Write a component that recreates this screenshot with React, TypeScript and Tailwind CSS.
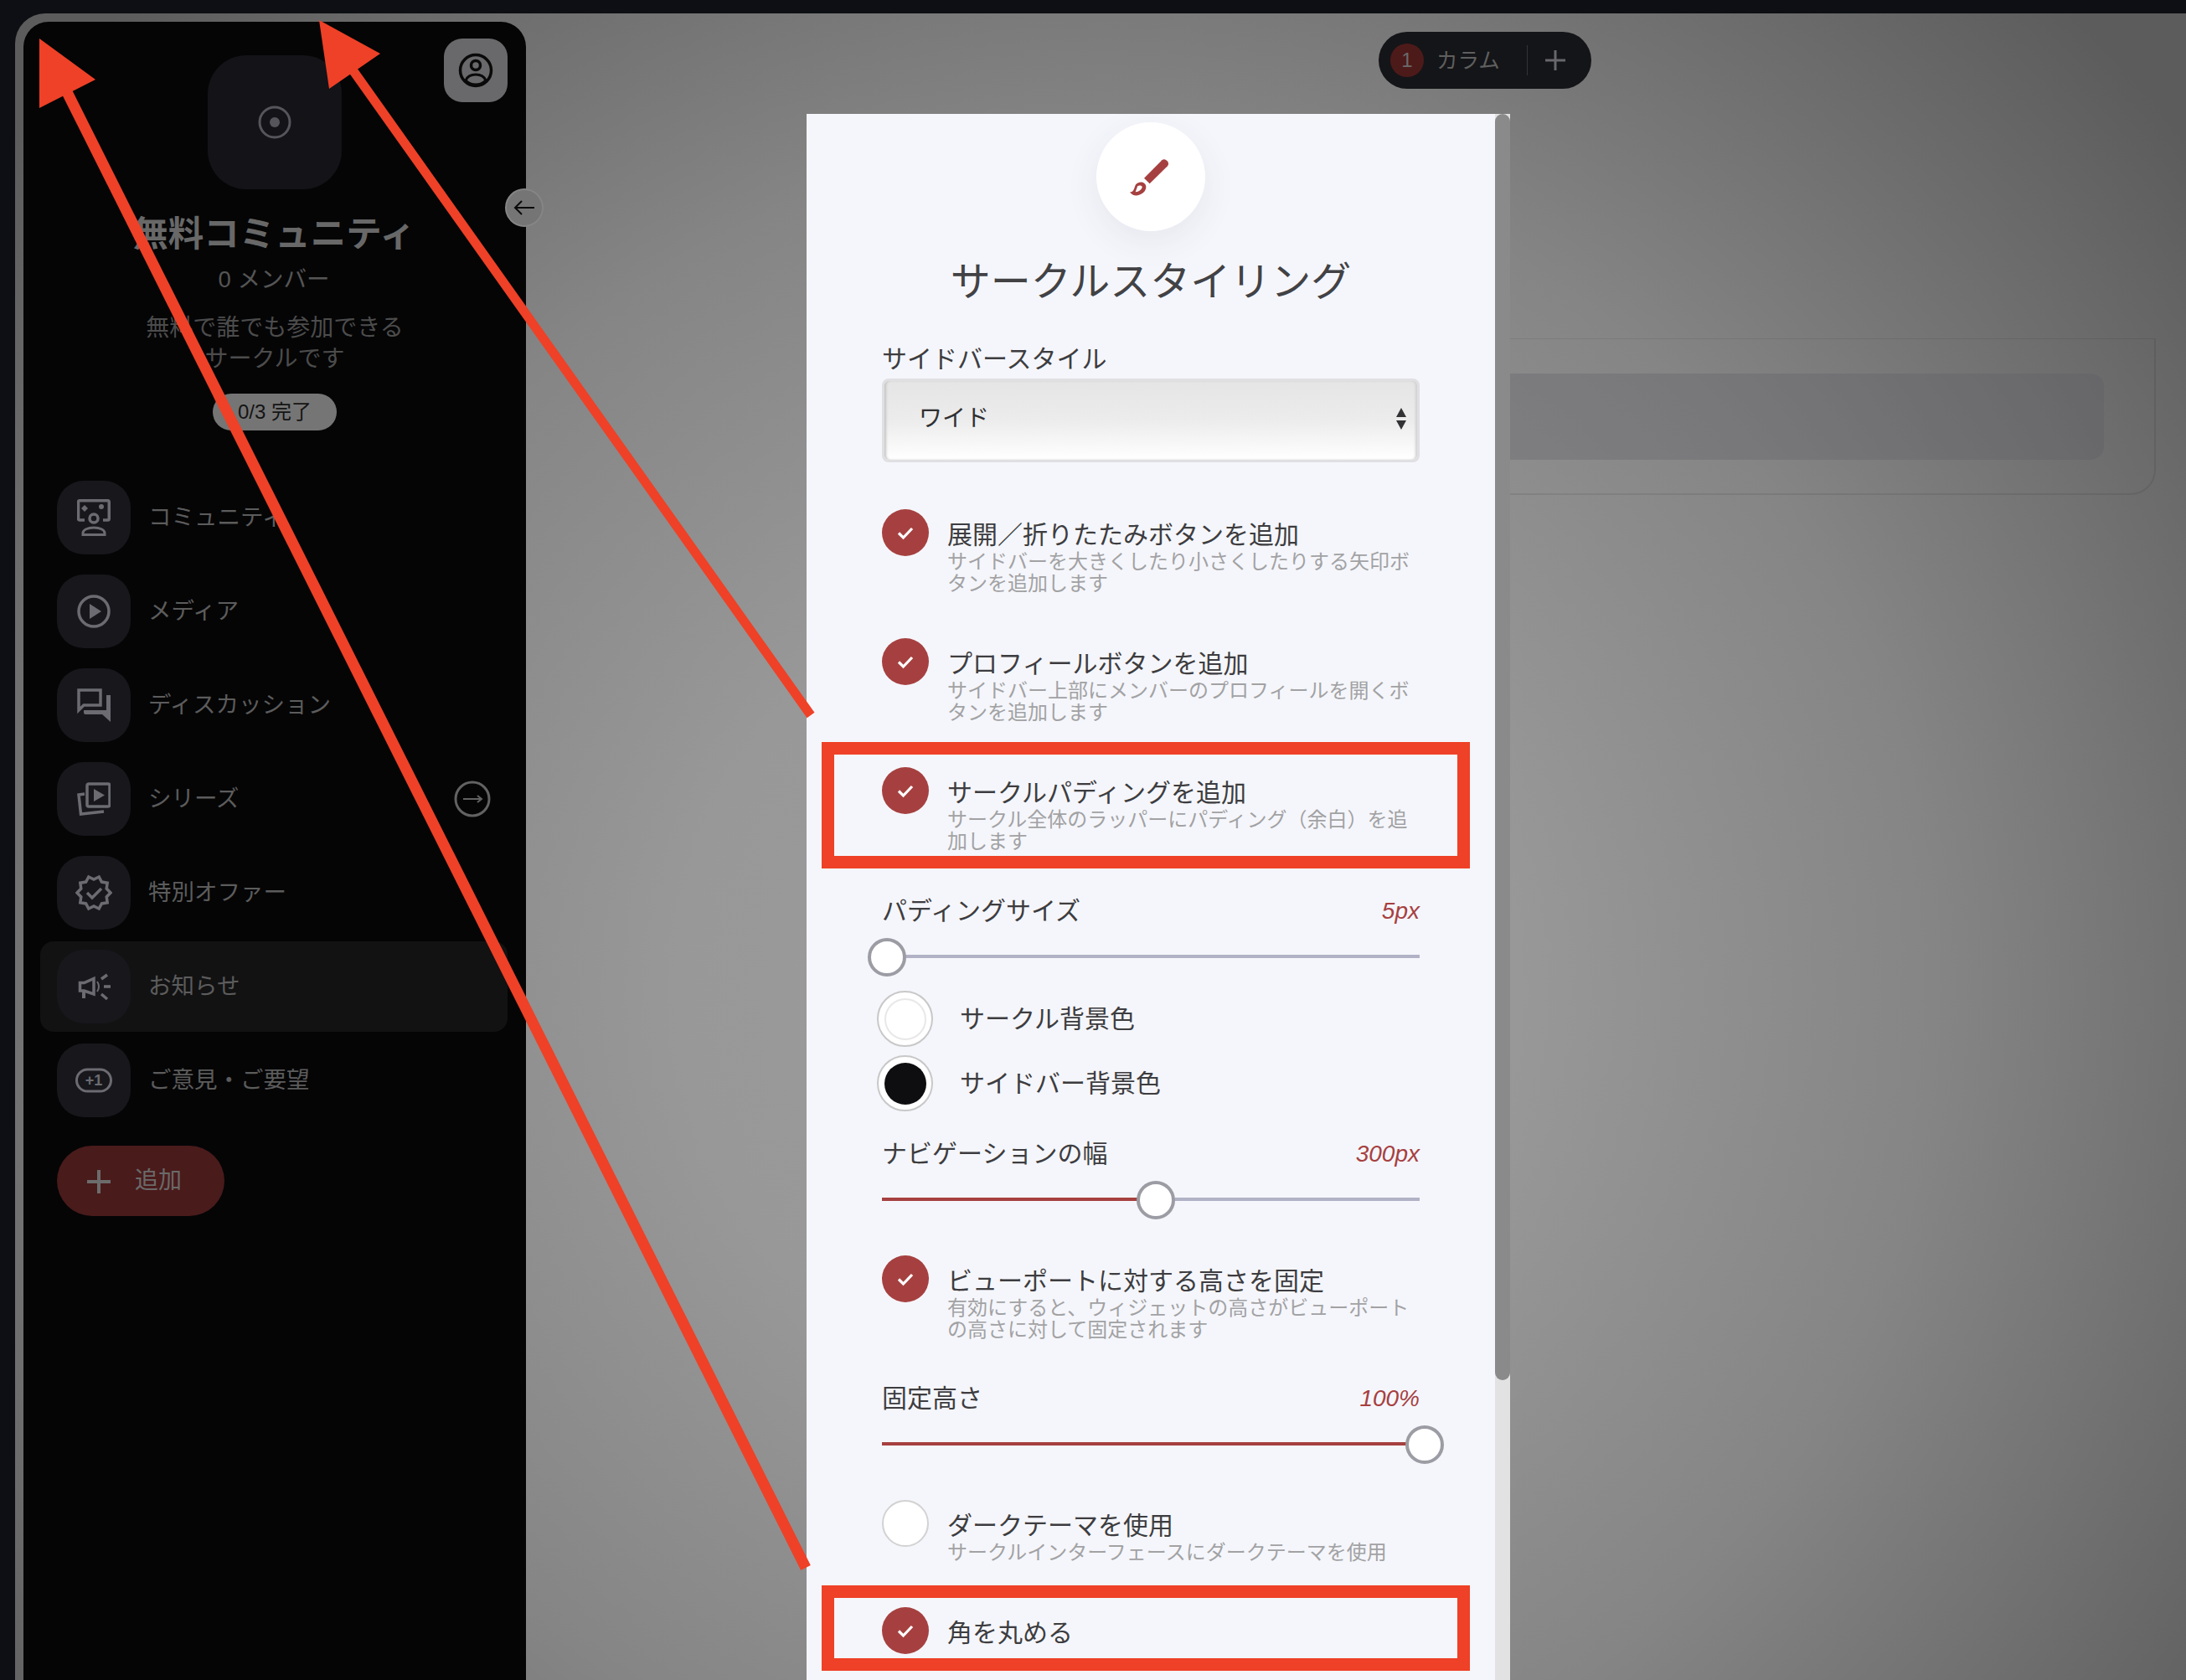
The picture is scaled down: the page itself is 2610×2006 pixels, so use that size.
import React from "react";

const ICON = "#6b6b71";

function CommunityIcon() {
  return (
    <svg width="40" height="44" viewBox="0 0 40 44" fill="none" stroke={ICON} strokeWidth="3.500">
      <path d="M9 25H3a1.500 1.500 0 0 1-1.500-1.500V3A1.500 1.500 0 0 1 3 1.750H37A1.500 1.500 0 0 1 38.250 3V23.500A1.500 1.500 0 0 1 37 25H31" />
      <path d="M9 7l4 4-4 4-4-4z" fill={ICON} stroke="none" />
      <circle cx="29" cy="9" r="3" fill={ICON} stroke="none" />
      <circle cx="20" cy="23" r="5" />
      <path d="M7 42.500v-2c0-4 6-6.500 13-6.500s13 2.500 13 6.500v2z" strokeWidth="3" />
    </svg>
  );
}
function MediaIcon() {
  return (
    <svg width="40" height="40" viewBox="0 0 40 40" fill="none" stroke={ICON} strokeWidth="3.500">
      <circle cx="20" cy="20" r="18" />
      <path d="M15 11L29 20L15 29Z" fill={ICON} stroke="none" />
    </svg>
  );
}
function ChatIcon() {
  return (
    <svg width="40" height="40" viewBox="0 0 40 40" fill="none">
      <path d="M2 2H28V20H8L2 26Z" stroke={ICON} strokeWidth="3.500" />
      <path d="M35 8H40V40L30 31H10Q8 31 8 29V26H35Z" fill={ICON} />
    </svg>
  );
}
function SeriesIcon() {
  return (
    <svg width="40" height="40" viewBox="0 0 40 40" fill="none" stroke={ICON} strokeWidth="3.500">
      <rect x="12" y="2" width="27" height="27" rx="2" />
      <path d="M20 8L33 15.500L20 23Z" fill={ICON} stroke="none" />
      <path d="M9 14L2 15L4.500 38L32 35" />
    </svg>
  );
}
function BadgeIcon() {
  const pts: string[] = [];
  for (let i = 0; i < 20; i++) {
    const r = i % 2 === 0 ? 20 : 16;
    const a = (Math.PI * i) / 10;
    pts.push(`${22 + r * Math.cos(a)},${22 + r * Math.sin(a)}`);
  }
  return (
    <svg width="44" height="44" viewBox="0 0 44 44" fill="none" stroke={ICON} strokeWidth="3.500">
      <polygon points={pts.join(" ")} />
      <path d="M14 22L20 28L31 17" strokeWidth="3.500" />
    </svg>
  );
}
function MegaphoneIcon() {
  return (
    <svg width="40" height="36" viewBox="0 0 40 36" fill="none" stroke={ICON}>
      <path d="M3.500 13.500H8.500L20 8.500V27L8.500 23H3.500Z" strokeWidth="3.500" />
      <path d="M8 23V32" strokeWidth="4" />
      <path d="M24 12q4 6 0 12" strokeWidth="2" />
      <path d="M29 9L36 4M32 18H40M29 27L36 33" strokeWidth="3.500" />
    </svg>
  );
}
function PlusOneIcon() {
  return (
    <svg width="44" height="30" viewBox="0 0 44 30" fill="none" stroke={ICON} strokeWidth="3">
      <rect x="1.500" y="2" width="41" height="26" rx="13" />
      <text x="22" y="21" textAnchor="middle" fontSize="18" fontWeight="700" fontFamily="Liberation Sans" fill={ICON} stroke="none">+1</text>
    </svg>
  );
}

function NavRow({ icon, label, active, arrow }: { icon: React.ReactNode; label: string; active?: boolean; arrow?: boolean }) {
  return (
    <div className={`flex h-[108px] items-center rounded-[16px] pl-[20px] pr-[20px] ${active ? "bg-[#121213]" : ""}`}>
      <div className="flex h-[88px] w-[88px] items-center justify-center rounded-[32px] bg-[#17171c]">{icon}</div>
      <span className="ml-[21px] flex-1 text-[27.500px] leading-[36px] text-[#5c5c5c]">{label}</span>
      {arrow && (
        <svg width="44" height="44" viewBox="0 0 44 44" fill="none" stroke="#626262" strokeWidth="3">
          <circle cx="22" cy="22" r="20" />
          <path d="M11 22H33M28 18L33 22L28 26" strokeWidth="2" />
        </svg>
      )}
    </div>
  );
}

function Check({ on = true }: { on?: boolean }) {
  return on ? (
    <div className="flex h-[56px] w-[56px] shrink-0 items-center justify-center rounded-full bg-[#a64040]">
      <svg width="24" height="24" viewBox="0 0 24 24" fill="none" stroke="#fff" strokeWidth="3.200">
        <path d="M4 12.500L9.500 18L20 7" />
      </svg>
    </div>
  ) : (
    <div className="h-[56px] w-[56px] shrink-0 rounded-full border-2 border-[#d2d2d2] bg-white" />
  );
}

function CheckRow({ title, desc, on, className }: { title: string; desc?: string; on?: boolean; className: string }) {
  return (
    <div className={`flex ${className}`}>
      <Check on={on} />
      <div className="ml-[22px] w-[564px] pt-[13px]">
        <div className="text-[30px] leading-[36px] text-[#3d3d40]">{title}</div>
        {desc && <div className="mt-[1px] text-[24px] leading-[26px] text-[#a2a2a4]">{desc}</div>}
      </div>
    </div>
  );
}

function SliderHead({ label, value, className }: { label: string; value: string; className: string }) {
  return (
    <div className={`flex h-[36px] items-center justify-between ${className}`}>
      <span className="text-[30px] leading-[36px] text-[#3d3d40]">{label}</span>
      <span className="text-[28px] italic leading-[36px] text-[#a64040]">{value}</span>
    </div>
  );
}

function Slider({ fillClass, thumbClass }: { fillClass: string; thumbClass: string }) {
  return (
    <div className="relative mt-[14px] flex h-[44px] items-center">
      <div className="h-[4px] w-full bg-[#b2b2c6]">
        <div className={`h-full bg-[#a64040] ${fillClass}`} />
      </div>
      <div className={`absolute top-0 h-[46px] w-[46px] rounded-full border-[4px] border-[#9c9ca4] bg-white ${thumbClass}`} />
    </div>
  );
}

function Swatch({ label, inner, className }: { label: string; inner: string; className: string }) {
  return (
    <div className={`-ml-[6px] flex items-center ${className}`}>
      <div className="flex h-[67px] w-[67px] items-center justify-center rounded-full border-2 border-[#c8c8c8] bg-white">
        <div className={`h-[50px] w-[50px] rounded-full ${inner}`} />
      </div>
      <span className="ml-[32px] text-[30px] leading-[36px] text-[#3d3d40]">{label}</span>
    </div>
  );
}

export default function App() {
  return (
    <div className="relative flex h-[2006px] w-[2610px] flex-col overflow-hidden bg-[#0d0f14] font-['Liberation_Sans','Noto_Sans_CJK_JP',sans-serif]">
      <main className="ml-[18px] mt-[16px] flex h-[1990px] rounded-tl-[36px] bg-[radial-gradient(circle_at_1292px_1164px,#9c9c9c_0px,#989898_500px,#858585_1000px,#727272_1300px,#5c5c5c_1650px)] pl-[10px] pt-[10px]">
        {/* Sidebar */}
        <aside className="relative flex w-[600px] shrink-0 flex-col rounded-t-[30px] bg-[#050506]">
          <div className="absolute left-[502px] top-[20px] flex h-[76px] w-[76px] items-center justify-center rounded-[22px] bg-[#69696b]">
            <svg width="42" height="42" viewBox="0 0 42 42" fill="none" stroke="#0a0a0a" strokeWidth="3.500">
              <circle cx="21" cy="21" r="18.500" />
              <circle cx="21" cy="15" r="5.500" />
              <path d="M9 33c2-5 7-7 12-7s10 2 12 7c-3 3-7 5-12 5s-9-2-12-5z" strokeWidth="3" />
            </svg>
          </div>
          <div className="absolute left-[575px] top-[199px] flex h-[46px] w-[46px] items-center justify-center rounded-full border-2 border-[#858585] bg-[#757575]">
            <svg width="26" height="22" viewBox="0 0 26 22" fill="none" stroke="#0a0a0a" strokeWidth="2">
              <path d="M25 11H2M10 3L2 11L10 19" />
            </svg>
          </div>

          <div className="flex flex-col items-center">
            <div className="mt-[40px] flex h-[160px] w-[160px] items-center justify-center rounded-[46px] bg-[#131318]">
              <svg width="40" height="40" viewBox="0 0 40 40" fill="none" stroke="#55555b" strokeWidth="3">
                <circle cx="20" cy="20" r="18" />
                <circle cx="20" cy="20" r="6" fill="#55555b" stroke="none" />
              </svg>
            </div>
            <h1 className="-ml-[2px] mt-[29px] text-[42.500px] font-bold leading-[50px] text-[#686868]">無料コミュニティ</h1>
            <p className="-ml-[2px] mt-[9px] text-[27.500px] leading-[40px] text-[#555555]">0 メンバー</p>
            <p className="mt-[19px] w-[320px] text-center text-[28px] leading-[37px] text-[#4c4c4c]">無料で誰でも参加できるサークルです</p>
            <div className="mt-[23px] flex h-[44px] w-[148px] items-center justify-center rounded-full bg-[#757575] text-[24px] text-[#141414]">0/3 完了</div>
          </div>

          <nav className="ml-[20px] mt-[50px] flex w-[558px] flex-col gap-[4px]">
            <NavRow icon={<CommunityIcon />} label="コミュニティ" />
            <NavRow icon={<MediaIcon />} label="メディア" />
            <NavRow icon={<ChatIcon />} label="ディスカッション" />
            <NavRow icon={<SeriesIcon />} label="シリーズ" arrow />
            <NavRow icon={<BadgeIcon />} label="特別オファー" />
            <NavRow icon={<MegaphoneIcon />} label="お知らせ" active />
            <NavRow icon={<PlusOneIcon />} label="ご意見・ご要望" />
          </nav>

          <div className="ml-[40px] mt-[24px] flex h-[84px] w-[200px] items-center rounded-full bg-[#4a1b1b] pl-[36px]">
            <svg className="mt-[2px]" width="28" height="28" viewBox="0 0 28 28" stroke="#6c6c6c" strokeWidth="4">
              <path d="M14 0V28M0 14H28" />
            </svg>
            <span className="ml-[29px] text-[28px] leading-[36px] text-[#6a6a6a]">追加</span>
          </div>
        </aside>

        {/* Page behind */}
        <section className="flex flex-1 flex-col">
          <div className="ml-[1018px] mt-[12px] flex h-[68px] w-[254px] items-center rounded-full bg-[#141518] pl-[14px]">
            <div className="flex h-[40px] w-[40px] items-center justify-center rounded-full bg-[#4d1a1a] text-[24px] text-[#6a6a6a]">1</div>
            <span className="ml-[15px] text-[25.500px] leading-[32px] text-[#5f5f5f]">カラム</span>
            <div className="ml-[32px] h-[36px] w-[1px] bg-[#333336]" />
            <svg className="ml-[21px]" width="24" height="24" viewBox="0 0 24 24" stroke="#68686c" strokeWidth="3">
              <path d="M12 0V24M0 12H24" />
            </svg>
          </div>
          <div className="ml-[1072px] mt-[298px] h-[187px] w-[874px] rounded-br-[30px] border-b-2 border-r-2 border-t border-[#00000014] pt-[41px]">
            <div className="mr-[60px] h-[103px] rounded-r-[16px] bg-[#5c5c66]/30" />
          </div>
        </section>
      </main>

      {/* Dialog */}
      <div className="absolute left-[963px] top-[136px] flex h-[1870px] w-[840px] bg-[#f5f6fb]">
        <div className="flex w-[822px] flex-col pl-[90px] pr-[90px]">
          <div className="mt-[10px] flex h-[130px] w-[130px] items-center justify-center self-center rounded-full bg-white shadow-[0_12px_40px_rgba(60,60,90,0.08)]">
            <svg width="110" height="100" viewBox="0 0 330 300" fill="#a64040">
              <path d="M141 155L205 91Q214 84 224 94Q232 104 225 112L161 175Z" />
              <path fillRule="evenodd" d="M90 205C104 205 104 195 110 180C118 166 145 164 148 185C150 205 123 222 103 216C98 214 94 210 90 205ZM118 183L110 205C122 205 134 195 134 187C134 181 124 180 118 183Z" />
            </svg>
          </div>
          <h2 className="mt-[31px] text-center text-[48px] font-normal leading-[60px] text-[#424245]">サークルスタイリング</h2>
          <div className="mt-[44px] text-[30px] leading-[36px] text-[#3d3d40]">サイドバースタイル</div>
          <div className="mt-[5px] flex h-[100px] items-center justify-between rounded-[8px] border-[3px] border-[#e0e0e3] bg-[linear-gradient(to_bottom,#e5e5e5_0%,#ececec_50%,#ffffff_100%)] pb-[5px] pl-[41px] pr-[12px] shadow-[inset_3px_0_3px_-1px_#c4c4c4,inset_-3px_0_3px_-1px_#d0d0d0]">
            <span className="text-[28px] leading-[36px] text-[#303033]">ワイド</span>
            <svg width="14" height="26" viewBox="0 0 14 26" fill="#333336">
              <path d="M7 0L13 11H1ZM7 26L1 15H13Z" />
            </svg>
          </div>

          <CheckRow className="mt-[56px]" title="展開／折りたたみボタンを追加" desc="サイドバーを大きくしたり小さくしたりする矢印ボタンを追加します" />
          <CheckRow className="mt-[52px]" title="プロフィールボタンを追加" desc="サイドバー上部にメンバーのプロフィールを開くボタンを追加します" />
          <CheckRow className="mt-[52px]" title="サークルパディングを追加" desc="サークル全体のラッパーにパディング（余白）を追加します" />

          <SliderHead className="mt-[52px]" label="パディングサイズ" value="5px" />
          <Slider fillClass="w-0" thumbClass="left-[-17px]" />

          <Swatch className="mt-[19px]" label="サークル背景色" inner="border-2 border-[#e8e8e8] bg-white" />
          <Swatch className="mt-[10px]" label="サイドバー背景色" inner="bg-[#0e0e10]" />

          <SliderHead className="mt-[33px]" label="ナビゲーションの幅" value="300px" />
          <Slider fillClass="w-[310px]" thumbClass="left-[304px]" />

          <CheckRow className="mt-[45px]" title="ビューポートに対する高さを固定" desc="有効にすると、ウィジェットの高さがビューポートの高さに対して固定されます" />

          <SliderHead className="mt-[51px]" label="固定高さ" value="100%" />
          <Slider fillClass="w-full" thumbClass="left-[625px]" />

          <CheckRow className="mt-[45px]" on={false} title="ダークテーマを使用" desc="サークルインターフェースにダークテーマを使用" />
          <CheckRow className="mt-[52px]" title="角を丸める" />
        </div>
        <div className="flex w-[18px] flex-col bg-[#e2e2e2]">
          <div className="h-[1512px] rounded-[9px] bg-[#8a8a8a]" />
        </div>
      </div>

      {/* Annotations */}
      <svg className="pointer-events-none absolute left-0 top-0" width="2610" height="2006" viewBox="0 0 2610 2006" fill="#ee4127">
        <polygon points="47,46 114,95 47,129" />
        <line x1="80" y1="110" x2="962" y2="1872" stroke="#ee4127" strokeWidth="13" />
        <polygon points="381,24 454,64 393,106" />
        <line x1="420" y1="82" x2="968" y2="854" stroke="#ee4127" strokeWidth="11" />
      </svg>
      <div className="pointer-events-none absolute left-[981px] top-[886px] h-[151px] w-[774px] border-[15px] border-[#ee4127]" />
      <div className="pointer-events-none absolute left-[981px] top-[1893px] h-[102px] w-[774px] border-[15px] border-[#ee4127]" />
    </div>
  );
}
